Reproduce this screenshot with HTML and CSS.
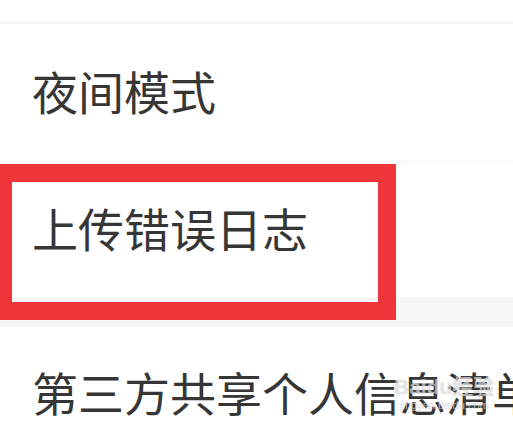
FILE: index.html
```html
<!DOCTYPE html>
<html lang="zh-CN">
<head>
    <meta charset="UTF-8">
    <title>设置</title>
    <link rel="stylesheet" href="styles.css">
</head>
<body>
    <div class="page">
        <div class="top-strip"></div>
        <div class="item">夜间模式</div>
        <div class="item last">上传错误日志</div>
        <div class="group-gap"></div>
        <div class="item bottom">第三方共享个人信息清单</div>

        <!-- 标注框 -->
        <div class="mark"></div>
        <div class="watermark">
            <span class="wm-big">Baidu经验</span>
            <span class="wm-small">jingyan.baidu.com</span>
        </div>
    </div>
</body>
</html>
```

FILE: styles.css
```css
body {
    margin: 0;
    background-color: #ffffff;
    font-family: 'Noto Sans CJK SC', 'Noto Sans', sans-serif;
    overflow: hidden;
}

.page {
    position: relative;
    width: 513px;
    height: 423px;
    overflow: hidden;
}

.top-strip {
    height: 22px;
    border-bottom: 2px solid #f5f5f5;
}

.item {
    display: flex;
    align-items: center;
    box-sizing: border-box;
    height: 138px;
    padding-left: 32px;
    padding-bottom: 6px;
    font-size: 46px;
    color: #363636;
    white-space: nowrap;
    border-bottom: 1px solid #f3f3f3;
}

.item.last {
    height: 135px;
    border-bottom: none;
}

.item.bottom {
    padding-bottom: 10px;
    border-bottom: none;
}

.group-gap {
    height: 30px;
    background-color: #f7f7f7;
}

.mark {
    position: absolute;
    left: -6px;
    top: 164px;
    width: 366px;
    height: 120px;
    border: 18px solid #ee3539;
}

.watermark {
    position: absolute;
    left: 394px;
    top: 376px;
    display: flex;
    flex-direction: column;
    color: rgba(255, 255, 255, 0.5);
    text-shadow: 0 0 1px rgba(130, 130, 130, 0.45);
    line-height: 1;
}

.wm-big {
    font-family: 'Liberation Sans', 'Noto Sans CJK SC', sans-serif;
    font-size: 21px;
    font-weight: bold;
}

.wm-small {
    font-family: 'Liberation Sans', sans-serif;
    font-size: 11px;
    margin-top: 3px;
    padding-left: 6px;
}
```
